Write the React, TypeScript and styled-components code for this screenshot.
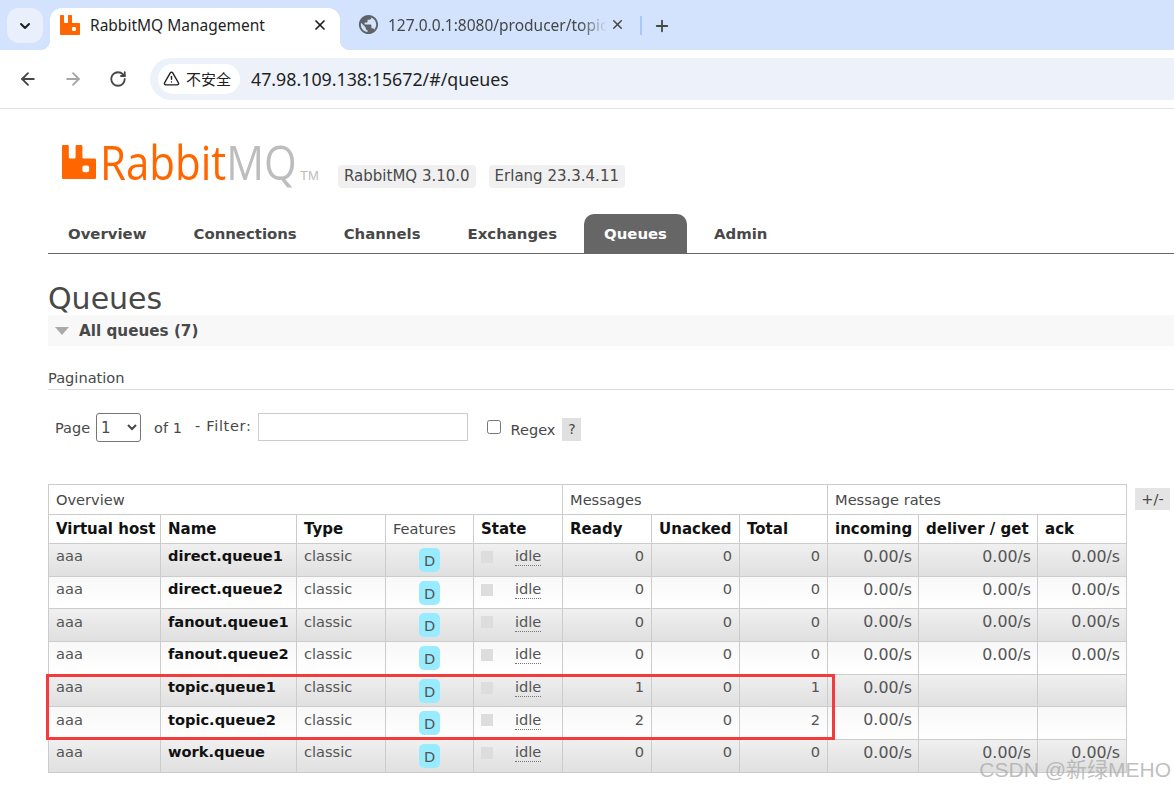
import React from 'react';
import styled, { createGlobalStyle } from 'styled-components';
import { ArrowLeft, ArrowRight, ChevronDown, Plus, RotateCw, TriangleAlert, X } from 'lucide-react';
import { MdPublic } from 'react-icons/md';
import { SiRabbitmq } from 'react-icons/si';

const GlobalStyle = createGlobalStyle`
    html, body {
        margin: 0;
        padding: 0;
        background: #fff;
        overflow: hidden;
    }
    * {
        box-sizing: border-box;
    }
`;

type Queue = {
    name: string;
    ready: number;
    unacked: number;
    total: number;
    deliver: boolean;
};

const queues: Queue[] = [
    { name: 'direct.queue1', ready: 0, unacked: 0, total: 0, deliver: true },
    { name: 'direct.queue2', ready: 0, unacked: 0, total: 0, deliver: true },
    { name: 'fanout.queue1', ready: 0, unacked: 0, total: 0, deliver: true },
    { name: 'fanout.queue2', ready: 0, unacked: 0, total: 0, deliver: true },
    { name: 'topic.queue1', ready: 1, unacked: 0, total: 1, deliver: false },
    { name: 'topic.queue2', ready: 2, unacked: 0, total: 2, deliver: false },
    { name: 'work.queue', ready: 0, unacked: 0, total: 0, deliver: true },
];

const columns = [112, 136, 89, 88, 89, 89, 88, 88, 91, 119, 89];
const navItems = ['Overview', 'Connections', 'Channels', 'Exchanges', 'Queues', 'Admin'];

function App() {
    return (
        <Screen>
            <GlobalStyle />
            <TabStrip>
                <TabSearch>
                    <ChevronDown size={16} strokeWidth={3} />
                </TabSearch>
                <ActiveTab>
                    <SiRabbitmq size={20} color="#ff6600" />
                    <TabTitle>RabbitMQ Management</TabTitle>
                    <TabClose>
                        <X size={16} strokeWidth={2.6} color="#1f1f1f" />
                    </TabClose>
                </ActiveTab>
                <IdleTab>
                    <MdPublic size={23} color="#5f6368" />
                    <IdleTitle>127.0.0.1:8080/producer/topic</IdleTitle>
                    <TabClose>
                        <X size={15} strokeWidth={2.4} color="#444746" />
                    </TabClose>
                </IdleTab>
                <TabDivider />
                <NewTab>
                    <Plus size={18} strokeWidth={2.4} color="#444746" />
                </NewTab>
            </TabStrip>
            <Toolbar>
                <NavButton>
                    <ArrowLeft size={20} strokeWidth={2.2} color="#444746" />
                </NavButton>
                <NavButton>
                    <ArrowRight size={20} strokeWidth={2.2} color="#a4a6a8" />
                </NavButton>
                <NavButton>
                    <RotateCw size={18} strokeWidth={2.4} color="#444746" />
                </NavButton>
                <Omnibox>
                    <SecurityChip>
                        <TriangleAlert size={17} strokeWidth={2} color="#1f1f1f" />
                        不安全
                    </SecurityChip>
                    <Address>47.98.109.138:15672/#/queues</Address>
                </Omnibox>
            </Toolbar>
            <Page>
                <Header>
                    <Logo>
                        <SiRabbitmq size={34} color="#ff6600" />
                        <LogoText>
                            Rabbit<LogoGrey>MQ</LogoGrey>
                        </LogoText>
                        <LogoTm>TM</LogoTm>
                    </Logo>
                    <Versions>
                        <Version>RabbitMQ 3.10.0</Version>
                        <Version>Erlang 23.3.4.11</Version>
                    </Versions>
                </Header>
                <Nav>
                    {navItems.map((item) => (
                        <NavItem key={item} $active={item === 'Queues'}>
                            {item}
                        </NavItem>
                    ))}
                </Nav>
                <Title>Queues</Title>
                <SectionBar>
                    <SectionArrow />
                    All queues (7)
                </SectionBar>
                <PaginationTitle>Pagination</PaginationTitle>
                <Filters>
                    <FilterLabel>Page</FilterLabel>
                    <PageSelect defaultValue="1">
                        <option value="1">1</option>
                    </PageSelect>
                    <OfLabel>of 1</OfLabel>
                    <FilterName>- Filter:</FilterName>
                    <FilterInput />
                    <RegexBox type="checkbox" />
                    <RegexLabel>Regex</RegexLabel>
                    <HelpMark>?</HelpMark>
                </Filters>
                <TableArea>
                    <QueueTable>
                        <colgroup>
                            {columns.map((width, index) => (
                                <col key={index} style={{ width }} />
                            ))}
                        </colgroup>
                        <thead>
                            <tr>
                                <GroupHead colSpan={5}>Overview</GroupHead>
                                <GroupHead colSpan={3}>Messages</GroupHead>
                                <GroupHead colSpan={3}>Message rates</GroupHead>
                            </tr>
                            <tr>
                                <ColHead>Virtual host</ColHead>
                                <ColHead>Name</ColHead>
                                <ColHead>Type</ColHead>
                                <ColHead $plain>Features</ColHead>
                                <ColHead>State</ColHead>
                                <ColHead>Ready</ColHead>
                                <ColHead>Unacked</ColHead>
                                <ColHead>Total</ColHead>
                                <ColHead>incoming</ColHead>
                                <ColHead>deliver / get</ColHead>
                                <ColHead>ack</ColHead>
                            </tr>
                        </thead>
                        <tbody>
                            {queues.map((queue, index) => (
                                <Row key={queue.name} $alt={index % 2 === 1}>
                                    <Cell>aaa</Cell>
                                    <NameCell>{queue.name}</NameCell>
                                    <Cell>classic</Cell>
                                    <FeatureCell>
                                        <FeatureBadge>D</FeatureBadge>
                                    </FeatureCell>
                                    <StateCell>
                                        <StateWrap>
                                            <StateDot />
                                            <StateText>idle</StateText>
                                        </StateWrap>
                                    </StateCell>
                                    <NumCell>{queue.ready}</NumCell>
                                    <NumCell>{queue.unacked}</NumCell>
                                    <NumCell>{queue.total}</NumCell>
                                    <RateCell>0.00/s</RateCell>
                                    <RateCell>{queue.deliver ? '0.00/s' : ''}</RateCell>
                                    <RateCell>{queue.deliver ? '0.00/s' : ''}</RateCell>
                                </Row>
                            ))}
                        </tbody>
                    </QueueTable>
                    <ColumnToggle>+/-</ColumnToggle>
                    <Highlight />
                </TableArea>
            </Page>
            <Watermark>CSDN @新绿MEHO</Watermark>
        </Screen>
    );
}

const Screen = styled.div`
    position: relative;
    width: 1174px;
    height: 790px;
    overflow: hidden;
    background: #fff;
    font-family: 'DejaVu Sans', Verdana, sans-serif;
    color: #484848;
`;

const TabStrip = styled.div`
    display: flex;
    align-items: flex-end;
    height: 50px;
    padding-left: 7px;
    background: #d3e3fd;
    font-family: 'Noto Sans', 'Noto Sans CJK SC', sans-serif;
`;

const TabSearch = styled.div`
    display: flex;
    align-items: center;
    justify-content: center;
    align-self: flex-start;
    width: 36px;
    height: 35px;
    margin-top: 8px;
    border-radius: 12px;
    background: #e9f0fc;
    color: #1f1f1f;
`;

const ActiveTab = styled.div`
    position: relative;
    display: flex;
    align-items: center;
    width: 290px;
    height: 42px;
    margin-left: 7px;
    padding: 0 10px 9px 10px;
    background: #fff;
    border-radius: 12px 12px 0 0;

    &::before,
    &::after {
        content: '';
        position: absolute;
        bottom: 0;
        width: 10px;
        height: 10px;
    }
    &::before {
        left: -10px;
        background: radial-gradient(circle at 0 0, #d3e3fd 10px, #fff 10.5px);
    }
    &::after {
        right: -10px;
        background: radial-gradient(circle at 100% 0, #d3e3fd 10px, #fff 10.5px);
    }
`;

const TabTitle = styled.span`
    flex: 1;
    margin-left: 10px;
    font-size: 15.5px;
    color: #1f1f1f;
    white-space: nowrap;
`;

const TabClose = styled.span`
    display: flex;
    align-items: center;
    justify-content: center;
    width: 20px;
`;

const IdleTab = styled.div`
    display: flex;
    align-items: center;
    width: 301px;
    height: 42px;
    padding: 0 14px 9px 17px;
`;

const IdleTitle = styled.span`
    flex: 1;
    width: 210px;
    margin-left: 8px;
    overflow: hidden;
    font-size: 15.5px;
    color: #444746;
    white-space: nowrap;
    mask-image: linear-gradient(to right, #000 88%, transparent 100%);
`;

const TabDivider = styled.div`
    align-self: flex-start;
    width: 2px;
    height: 19px;
    margin: 16px 0 0 -1px;
    background: #a8c7fa;
`;

const NewTab = styled.div`
    display: flex;
    align-items: center;
    align-self: flex-start;
    height: 19px;
    margin: 16px 0 0 11px;
`;

const Toolbar = styled.div`
    display: flex;
    align-items: center;
    height: 59px;
    padding: 0 0 1px 6px;
    background: #fff;
    border-bottom: 1px solid #e3e3e3;
    border-top-left-radius: 10px;
    font-family: 'Noto Sans', 'Noto Sans CJK SC', sans-serif;
`;

const NavButton = styled.div`
    display: flex;
    align-items: center;
    justify-content: center;
    width: 44px;
    height: 36px;
    margin-right: 1px;
`;

const Omnibox = styled.div`
    display: flex;
    flex: 1;
    align-items: center;
    height: 42px;
    margin-left: 9px;
    padding-left: 8px;
    border-radius: 21px 0 0 21px;
    background: #edf2fa;
`;

const SecurityChip = styled.div`
    display: flex;
    align-items: center;
    gap: 6px;
    width: 82px;
    height: 30px;
    padding-left: 5px;
    border-radius: 15px;
    background: #fff;
    font-family: 'Noto Sans CJK SC', sans-serif;
    font-size: 15px;
    color: #1f1f1f;
`;

const Address = styled.div`
    margin-left: 11px;
    font-size: 17.8px;
    color: #1f1f1f;
    white-space: nowrap;
`;

const Page = styled.div`
    padding-left: 48px;
`;

const Header = styled.div`
    display: flex;
    align-items: flex-end;
    height: 78px;
    padding-left: 14px;
`;

const Logo = styled.div`
    position: relative;
    display: flex;
    align-items: center;
    width: 276px;
    height: 50px;
`;

const LogoText = styled.span`
    display: inline-block;
    margin-left: 4px;
    font-family: 'Open Sans', 'Liberation Sans', sans-serif;
    font-size: 48px;
    font-weight: 400;
    line-height: 46px;
    color: #ff6600;
    white-space: nowrap;
    transform: scaleX(0.875);
    transform-origin: left center;
`;

const LogoGrey = styled.span`
    color: #bdbdbd;
`;

const LogoTm = styled.span`
    position: absolute;
    left: 238px;
    top: 31px;
    font-family: 'Liberation Sans', Arial, sans-serif;
    font-size: 13px;
    color: #bdbdbd;
`;

const Versions = styled.div`
    display: flex;
    gap: 13px;
    margin-bottom: -1px;
`;

const Version = styled.span`
    height: 23px;
    padding: 0 6px;
    border-radius: 4px;
    background: #f0f0f0;
    font-size: 15px;
    line-height: 23px;
    color: #484848;
    white-space: nowrap;
`;

const Nav = styled.div`
    display: flex;
    align-items: flex-end;
    height: 40px;
    margin-top: 27px;
    border-bottom: 1px solid #666;
`;

const NavItem = styled.div<{ $active?: boolean }>`
    height: 39px;
    padding: 1px 20px 0;
    margin-right: 7px;
    border-radius: 10px 10px 0 0;
    background: ${(props) => (props.$active ? '#666' : 'transparent')};
    font-size: 14.9px;
    font-weight: 700;
    line-height: 38px;
    color: ${(props) => (props.$active ? '#fff' : '#484848')};
`;

const Title = styled.h1`
    margin: 29px 0 0;
    font-size: 30px;
    font-weight: 400;
    line-height: 32px;
    color: #484848;
`;

const SectionBar = styled.div`
    display: flex;
    align-items: center;
    height: 31px;
    background: #f8f8f8;
    font-size: 15.2px;
    font-weight: 700;
    color: #484848;
`;

const SectionArrow = styled.span`
    width: 0;
    height: 0;
    margin: 0 10px 0 7px;
    border-style: solid;
    border-width: 8px 7.5px 0;
    border-color: #aaa transparent transparent;
`;

const PaginationTitle = styled.div`
    height: 21px;
    margin-top: 23px;
    border-bottom: 1px solid #ddd;
    font-size: 14.6px;
    line-height: 18px;
    color: #484848;
`;

const Filters = styled.div`
    display: flex;
    align-items: center;
    height: 29px;
    margin-top: 23px;
    padding-left: 7px;
    font-size: 14.5px;
    color: #484848;
`;

const FilterLabel = styled.span`
    margin-right: 6px;
`;

const FilterName = styled(FilterLabel)`
    margin-top: -4px;
    letter-spacing: 0.7px;
`;

const PageSelect = styled.select`
    width: 45px;
    height: 29px;
    margin-right: 13px;
    border: 1px solid #767676;
    border-radius: 3px;
    background: #fff;
    font-family: 'DejaVu Sans', sans-serif;
    font-size: 15px;
    color: #484848;
`;

const OfLabel = styled.span`
    margin-right: 13px;
`;

const FilterInput = styled.input`
    align-self: flex-start;
    width: 210px;
    height: 28px;
    border: 1px solid #ccc;
    background: #fff;
`;

const RegexBox = styled.input`
    width: 14px;
    height: 14px;
    margin: -2px 0 0 19px;
`;

const RegexLabel = styled.span`
    margin: 4px 0 0 10px;
`;

const HelpMark = styled.span`
    width: 19px;
    height: 23px;
    margin: 4px 0 0 7px;
    background: #e0e0e0;
    font-size: 14px;
    line-height: 23px;
    text-align: center;
`;

const TableArea = styled.div`
    position: relative;
    display: flex;
    align-items: flex-start;
    margin-top: 42px;
`;

const QueueTable = styled.table`
    width: 1078px;
    table-layout: fixed;
    border-collapse: collapse;
    font-size: 14.6px;
`;

const GroupHead = styled.th`
    height: 30px;
    padding: 0 7px 1px;
    border: 1px solid #ccc;
    background: #fff;
    font-weight: 400;
    text-align: left;
    vertical-align: middle;
    color: #484848;
`;

const ColHead = styled.th<{ $plain?: boolean }>`
    height: 29px;
    padding: 0 7px 1px;
    border: 1px solid #ccc;
    background: #fff;
    font-size: ${(props) => (props.$plain ? '14.6px' : '15px')};
    font-weight: ${(props) => (props.$plain ? 400 : 700)};
    text-align: left;
    vertical-align: middle;
    color: ${(props) => (props.$plain ? '#484848' : '#111')};
    white-space: nowrap;
`;

const Row = styled.tr<{ $alt?: boolean }>`
    height: 32.7px;
    background: ${(props) =>
        props.$alt
            ? 'linear-gradient(#f8f8f8, #ffffff)'
            : 'linear-gradient(#f0f0f0, #dfdfdf)'};
`;

const Cell = styled.td`
    padding: 0 7px 8px;
    border: 1px solid #ccc;
    color: #555;
    white-space: nowrap;
`;

const NameCell = styled(Cell)`
    font-weight: 700;
    color: #111;
`;

const FeatureCell = styled(Cell)`
    padding: 0;
`;

const FeatureBadge = styled.div`
    width: 21px;
    height: 24px;
    margin: 0 auto;
    border-radius: 5px;
    background: #99ebff;
    font-size: 14.6px;
    line-height: 25px;
    text-align: center;
`;

const StateCell = styled(Cell)`
    padding-bottom: 6px;
`;

const StateWrap = styled.div`
    display: flex;
    align-items: center;
`;

const StateDot = styled.span`
    width: 12px;
    height: 12px;
    background: #ddd;
`;

const StateText = styled.span`
    margin-left: 22px;
    border-bottom: 1px dotted #777;
    line-height: 18px;
`;

const NumCell = styled(Cell)`
    text-align: right;
`;

const RateCell = styled(NumCell)`
    padding-right: 6px;
    padding-bottom: 7px;
    font-size: 15.8px;
`;

const ColumnToggle = styled.div`
    width: 35px;
    height: 22px;
    margin: 4px 0 0 8px;
    background: #e4e4e4;
    font-size: 14.6px;
    line-height: 22px;
    text-align: center;
    color: #484848;
`;

const Highlight = styled.div`
    position: absolute;
    left: -2px;
    top: 190px;
    width: 789px;
    height: 66px;
    border: 3px solid #f33b3b;
    pointer-events: none;
`;

const Watermark = styled.div`
    position: absolute;
    right: 3px;
    bottom: 7px;
    font-family: 'Liberation Sans', 'Noto Sans CJK SC', sans-serif;
    font-size: 21px;
    color: rgba(170, 170, 170, 0.75);
    white-space: nowrap;
`;

export default App;
